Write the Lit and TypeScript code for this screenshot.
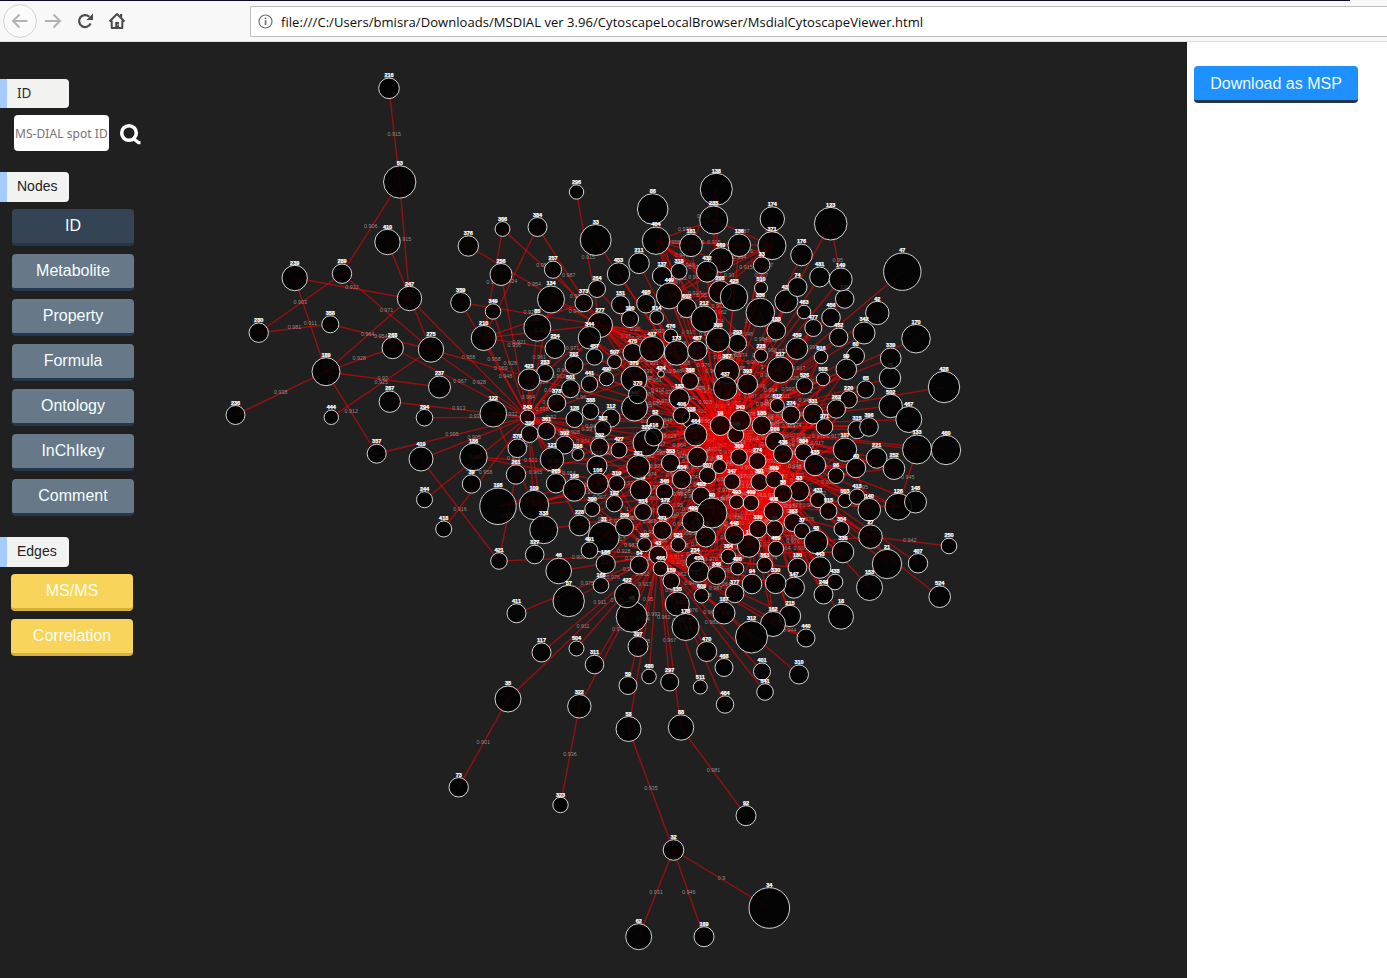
import { LitElement, html, svg, css } from "lit";
import { customElement } from "lit/decorators.js";

interface GraphNode { id: string; label: string; x: number; y: number; r: number; }
interface GraphEdge { a: GraphNode; b: GraphNode; value: string; }

// Each entry: id x y radius. A trailing letter keeps repeated spot IDs apart.
// Order is paint order, so covered nodes come first.
const NODE_DATA = `
120 844.7 299 9.3;75 890 378 10.7;346 735.7 435 8;414 597 466 10;106 597.7 483.5 10.5;45 631.7 616.7 15.5;
382x 634.5 408 13;349x 640.7 490 10.5;28 697.5 457 9.8;13x 705.7 537 10;58x 774.7 529 8.5;
216 389 88.3 10.3;53 399.7 182 16.2;410 387.5 242 12.7;239 294.7 278 12.7;289 342 273.7 9.7;247 409.5 298.5 12.2;
376 468.3 246 10.2;280 258.7 332.7 9.7;358 330.3 324.3 8.5;268 392.7 348 10.7;275 431 349.5 12.7;189 326 371.7 14;
237 439.5 387 11;267 389.8 401.7 10.7;294 424.5 417.7 8.3;236 235.5 415 9.5;444 331.3 417.3 7.2;357 376.7 453.7 9.5;
419 421 459 12;244 424.5 499.7 8;418 443.7 529 8;
296 576.5 192 7.2;384 537.5 227 9.5;366 502.5 229 7.4;33 595.7 240 15.5;256 501 274.5 11;257 553 269.7 8.6;
453 618.5 274 11.2;264 597 289 8.5;134 551 299.5 13.5;373 583.7 303 8.8;151 620.5 304.7 9;359 460.7 302.5 10;
349 493 311.5 7.7;277 600 325 12.5;85 537.3 327.7 13.5;190 630 319 8.6;210 483.7 338 12.5;344 589.5 337.7 11.2;
254 555 348.5 10;457 594.5 357 8.2;291 574 365.3 9;475 632.5 353 9.5;507 614.5 361.7 7;283 545 373 8.5;
423 529 379.7 10.8;490 606.5 378.7 7.2;441 589.5 384 8.2;501 570.5 388.7 9;379 634 379 13;
138 716.3 189.3 16;86 652.7 209 15.3;285 713.7 220 14;174 772.3 219 12.2;371 772 245.7 14;404 656 240.7 13.7;
181 691 245.3 11.3;136 739.3 245.3 11.3;211 639 263.3 10.3;469 720.7 260 12.3;432 707 271.7 10.5;137 662 276 9.6;
318 679 271.3 8;23 761.7 265.3 8.3;510 761 288 6.5;449 669.3 296 12.9;208 720 292 11.3;425 734 297 13.7;
432b 786.3 301.3 11.5;336 760.3 312.5 14.3;495 646 303.7 9.3;602 686.7 308 9.6;514 656.7 317.5 6.8;212 704 319 13;
188 776.3 330.7 9.3;476 670.7 336 7;293 737.5 343.3 9;395 718 340 12;417 652 349 12.5;173 676.5 353 12.2;
487 697.3 350.7 9.7;459 797 348.7 10.8;225 761 355.7 6.6;217 780.3 370 13;387 727 371 12.5;386 690 381 8.5;
424 661 374 3.3;437 725.3 388.5 11.8;393 747.5 384 10;
123 830.7 223.7 16.3;47 902.3 271.7 18.7;176 801.5 255 10.8;481 819.7 277 10;149 840.7 279.5 11.5;74 797.5 287 9.5;
463 804 312 6.8;456 831 317.5 9.3;42 877.3 313 11.7;477 813.3 328 8.5;452 838.7 337.3 9.2;342 864 333 11;
170 916 338.7 14.3;60 855.5 356 9;516 821 357 6.7;339 890.7 358.3 10.3;99 846.3 369.3 10.3;505 823 379 6.8;
428 944 387 15.7;526 804.5 385.7 8.2;65 865.7 389.5 8.7;220 848.7 399.5 8.6;502 890.7 406 11.7;262 836.3 409 9.2;
467 908.8 419.5 13;374 791 415 9;331 813 414 10;271 824.5 427 8.3;315 857 429.7 9;396 869 427 9.3;107 845 449.7 11.7;
133 917 449.5 14.5;460 946 450 14.7;221 876.7 458 10.3;394 803.5 452.3 8.6;435 815 465 10.7;40b 856 468 9.7;
252 894 468.7 10.8;96 836 475.7 7.9;83 799.3 491 10;431 818 500 7.7;503 845 500.5 7;413 857 496.7 7.7;
140 869.3 509.7 11.3;126 898.3 506.7 13.3;148 915.5 502 11;515 828.5 511 8.5;354 841.5 529 7.5;27 870.5 536.7 11.8;
383 793 522.5 9;37 802 531 7.8;48 816 542 11.7;336b 843 552 10.8;250 949 546 7.8;21 887 564 14.7;407 918 563.3 9.7;
180 797.5 567.5 9.3;443 820 567.5 10.8;438 835 582 7.8;147 794 587.7 10.5;153 869.5 587.5 13;249 823.5 594.5 9.5;
524 939.7 596.7 10.8;18 841 616.7 12.5;215 790 616 10.7;440 806 638 9;
122 493.3 413.7 13.3;243 527.5 417.3 7.3;378 556.7 403 9;128 574.5 419 8.5;388 590.5 411.3 8.2;112 611 418 9;
382 603 428.5 8;306 529.7 434 8.5;361 546.5 431 8.8;378b 517.3 448.3 9.3;392 564.7 445 9;398 578 454.5 6;
427 619 450 8;292 599.5 447 9;121 552 459.3 11.7;186 473.5 457 13.7;39 471.5 484 9.2;261 516 474.5 9.7;
265 556 483.3 9.7;195 574.3 490 11.2;319 616.7 483.5 8;192 614.3 503.7 8.2;390 592.3 509 7.5;198 498 506.3 18.2;
109 534 505 14.7;333 543.7 529.7 14;228 579.5 525.5 10.3;31 603.7 537 15.5;259 624.5 527 9;491 589.5 550.3 8.3;
421 499 561 8.3;327 534.7 554.5 9.3;46 558.7 571 12.8;156 605.7 564 9.6;168 601 585.3 7.8;57 568.7 601 15.7;
411 516.5 613.3 9.5;422 627 595.3 12.5;
370 637.7 394.5 9.2;52 655.3 423 8.3;183 679.3 398.5 10;338 691 420 8.7;406 681.5 415.5 8.3;464 695.7 434.7 11.3;
323b 646 443 13;416 653.7 437 9;16 720.3 425.5 10;343 740.3 420.5 10.3;185 761.7 425.5 9.5;512 777.3 405.5 7;
266 775 441.5 9.5;436 783 454 9.5;300 739 457 8.2;274 757.5 461 8.5;321 638.3 467 11.5;353 670.5 463 9;
63 719.5 466.5 7;207 707.5 475.5 8.2;347 732 481.7 8;391 759.5 482 8.5;509 774.3 479.5 8.5;454 681.7 479.5 9.3;
345 664.5 492 8.3;56 783 493.5 9;403 701 496 9;493 736.5 502 7;409 751 503 7.8;408 773.5 511.5 9.5;40 712 513 15;
514b 643 512 8.5;172 665.3 511 7.8;499 693 521.5 10.8;471 662.3 530.3 9.2;11 748.7 546 11.3;448 734.3 535 9.5;
330 758 529 8.8;365 644.5 544.7 7;521 678.3 544.7 7.3;489 776 548.7 7.6;384b 728.3 556.5 7.3;43 658 555 9;
466 660.5 568.5 7.3;54 639.3 565 9;234 695 562 9;450 698.7 571.7 10.5;246 716.5 575.5 9;496 737.3 568.5 6.5;
363 764.7 565 7.7;159 671.3 581 8.3;135 677.3 604 12;609 701.5 595.7 7.3;94 752 584 9.8;330b 775.7 583.3 10.3;
377 734.7 593.5 9.2;187 724 613 11;178 685.5 627 13.5;162 773 624 12.5;312 751.5 637 16;397 638 646.5 10;
470 706.7 651.5 10;468 724 667.5 9;401 762 671.5 8.5;310 799 674.5 9.5;541 765 692 8.3;480 649 676.5 7.3;
59 628 685.5 9;297 669.7 682 9;511 700.3 687 7;484 725 704.5 8.7;88 681 727.5 12.7;58 628.5 729 12.5;
311 594.5 664.5 9.3;504 576.5 648.5 7.5;117 541.5 652.5 9.5;35 508 699 13;322 579.3 706.3 11.7;73 458.7 787.3 9.7;
323 560.5 805 7.7;92 746 815.7 10;32 673.5 850 10.3;34 769.3 908 20.3;62 638.7 936.7 13;169 704 936.7 10`;

const NODES: GraphNode[] = NODE_DATA.split(";").map((row) => {
  const [id, x, y, r] = row.trim().split(/\s+/);
  return { id, label: id.replace(/[a-z]/g, ""), x: +x, y: +y, r: +r };
});
const BY_ID = new Map(NODES.map((n) => [n.id, n] as const));

const EDGE_DATA = `
216-53:0.915 53-289:0.906 53-247:0.915 410-275:0.931 239-247:0.932 239-189:0.911 289-280:0.903 289-275:0.971
280-358:0.981 358-275:0.954 247-189:0.964 268-189:0.928 237-189:0.93 236-189:0.938 275-444:0.925 189-357:0.912
247-243:0.958 275-243:0.928 275-501:0.969 268-243:0.967 267-243:0.913 294-243:0.932 357-243:0.995 419-243:0.905
419-421:0.916 244-243:0.956 418-243:0.958 421-261:0.918 421-43:0.906 411-43:0.975 57-43:0.976 117-43:0.911
35-43:0.911 35-73:0.901 322-323:0.936 322-43:0.978 311-43:0.971 504-43:0.975 58-43:0.978 58-32:0.935 88-92:0.981
88-43:0.967 32-62:0.931 32-169:0.946 32-34:0.9 376-277:0.954 366-210:0.931 366-373:0.957 384-210:0.924
384-277:0.987 256-243:0.956 257-277:0.932 359-277:0.922 359-243:0.958 349-243:0.928 210-277:0.931 210-243:0.948
210-373:0.935 210-254:0.921 134-277:0.949 134-243:0.961 85-243:0.953 296-277:0.915 33-16:0.932 123-120:0.95
133-126:0.945 27-250:0.942 404-285:0.976 404-371:0.995 285-371:0.987 138-181:0.964 174-371:0.981 404-181:0.958
404-136:0.956 404-469:0.93 404-432:0.947 404-425:0.971 371-432:0.964 371-469:0.975 371-449:0.974 371-602:0.93
404-208:0.948 449-208:0.917 449-469:0.909 449-425:0.95 449-318:0.947 432-136:0.96 23-510:0.957 510-371:0.967
371-208:0.915 404-602:0.97 404-336:0.955 404-212:0.962 423-243:0.964 344-243:0.963 501-243:0.934 128-243:0.92
283-277:0.971 121-243:0.938 195-243:0.954 109-243:0.921 333-243:0.965 228-243:0.975 261-243:0.901 186-321:0.968
39-186:0.958 186-345:0.954 122-243:0.932 321-243:0.974 353-243:0.928 427-243:0.928 292-243:0.95 319-243:0.936
345-243:0.97 454-243:0.96 416-243:0.94 323b-243:0.99 122-109:0.971 378b-306:0.95 378-243:0.938 254-243:0.934
291-243:0.956 277-243:0.963 277-395:0.97 277-173:0.951 277-417:0.95 277-487:0.97 277-393:0.94 277-217:0.953
277-437:0.961 277-183:0.954 277-379:0.967 277-476:0.95 277-386:0.949 277-343:0.93 277-338:0.939 277-464:0.95
344-464:0.95 344-16:0.951 344-406:0.948 198-321:0.939 109-321:0.905 109-353:0.98 109-345:0.967 333-172:0.962
379-243:0.96 441-243:0.932 417-243:0.941 198-454:0.978 195-454:0.97 261-464:0.96 271-436:0.97 40b-140:0.95 413-21:0.926
126-16:0.974 148-16:0.961 21-16:0.947 153-16:0.978 524-16:0.947 407-16:0.962 18-391:0.935 443-391:0.96 249-391:0.95
440-162:0.944 310-43:0.971 541-43:0.981 401-43:0.966 312-43:0.958 43-16:1 43-40:0.956 43-464:0.98 43-353:0.968
43-321:0.978 43-323b:0.962 43-417:0.976 43-386:0.981 43-27:0.97 43-448:0.95 43-48:0.962 43-383:0.93 43-336b:0.97`;

const VALUES = ["0.962", "0.931", "0.974", "1", "0.948", "0.917", "0.987", "0.95", "0.928", "0.976", "0.993", "0.964"];

function buildEdges(): GraphEdge[] {
  const edges: GraphEdge[] = [];
  const seen = new Set<string>();
  const link = (a?: GraphNode, b?: GraphNode, value?: string) => {
    if (!a || !b || a === b) return;
    const key = [a.id, b.id].sort().join("|");
    if (seen.has(key)) return;
    seen.add(key);
    edges.push({ a, b, value: value ?? VALUES[edges.length % VALUES.length] });
  };
  const dist = (n: GraphNode, x: number, y: number) => Math.hypot(n.x - x, n.y - y);
  // The tightly correlated cluster below and to the right of the main hub.
  const core = NODES.filter((n) => dist(n, 762, 492) < 56);
  core.forEach((a, i) => core.slice(i + 1).forEach((b, j) => {
    if ((i + j) % 5 !== 0) link(a, b, (i + j) % 4 === 1 ? undefined : "");
  }));
  for (const item of EDGE_DATA.trim().split(/\s+/)) {
    const [pair, value] = item.split(":");
    const [a, b] = pair.split("-");
    link(BY_ID.get(a), BY_ID.get(b), value);
  }
  const hub = BY_ID.get("16")!;
  const low = BY_ID.get("43")!;
  // Neighbours that attach to a few members of the cluster.
  const anchors = ["274", "391", "409", "408", "300", "343"].map((id) => BY_ID.get(id)!);
  NODES.forEach((n, i) => {
    const d = dist(n, 752, 480);
    if (d >= 40 && d < 150) {
      link(n, anchors[i % 6]);
      if (n.x > 690) link(n, anchors[(i + 2) % 6], "");
    }
  });
  NODES.forEach((n, i) => {
    if (dist(n, 715, 400) >= 90) return;
    const other = NODES[(i * 7) % NODES.length];
    link(n, dist(other, 715, 420) < 160 ? other : hub);
  });
  // Spokes of the lower hub.
  for (const n of NODES) {
    const below = n.y > 560 && n.y < 710 && n.x > 530 && n.x < 810;
    if (below || (dist(n, low.x, low.y) < 110 && n.x < 740)) link(n, low);
  }
  // Spokes of the main hub.
  for (const n of NODES) {
    if (n.x > 560 && n.y < 580 && n.y > 180 && dist(n, hub.x, hub.y) < 245) link(n, hub);
  }
  return edges;
}
const EDGES = buildEdges();

@customElement("network-graph")
export class NetworkGraph extends LitElement {
  static styles = css`
    :host { display: block; }
    svg { display: block; width: 1187px; height: 936px; font-family: "Liberation Sans", Arial, sans-serif; }
    .edge { stroke: #f00; stroke-opacity: 0.53; stroke-width: 1.4; }
    .value { font-size: 5.4px; fill: #a8a8a8; fill-opacity: 0.8; text-anchor: middle; }
    .node { fill: #000; fill-opacity: 0.86; stroke: #e8e8e8; stroke-width: 0.9; }
    .name { font-size: 5.5px; font-weight: 700; fill: #fff; stroke: #fff; stroke-width: 0.25; text-anchor: middle; }
  `;
  render() {
    return html`<svg viewBox="0 42 1187 936">
      ${EDGES.map((e) => svg`<line class="edge" x1=${e.a.x} y1=${e.a.y} x2=${e.b.x} y2=${e.b.y}></line>
        ${e.value ? svg`<text class="value" x=${(e.a.x + e.b.x) / 2} y=${(e.a.y + e.b.y) / 2 - 1.2 + 1.8}>${e.value}</text>` : ""}`)}
      ${NODES.map((n) => svg`<circle class="node" cx=${n.x} cy=${n.y} r=${n.r}></circle>
        <text class="name" x=${n.x} y=${n.y - n.r - 0.8}>${n.label}</text>`)}
    </svg>`;
  }
}

@customElement("browser-bar")
export class BrowserBar extends LitElement {
  static styles = css`
    :host { display: flex; flex-direction: column; height: 42px; box-sizing: border-box; background: #f8f8f8; border-bottom: 1px solid #dedede; overflow: hidden; }
    .strip { height: 1px; width: 1350px; background: #0c0c26; }
    .row { display: flex; height: 40px; align-items: center; }
    .nav { width: 250px; height: 40px; flex: none; }
    .url { flex: 1; height: 31px; box-sizing: border-box; border: 1px solid #bcbcbc; border-right: 0; border-radius: 2px 0 0 2px; background: #fff; display: flex; align-items: center; padding-left: 7px; gap: 8px; }
    .info { width: 15px; height: 15px; flex: none; }
    .text { font: 13px/28px "Open Sans", "Noto Sans", sans-serif; color: #0c0c0d; white-space: pre; letter-spacing: 0.055px; padding-top: 2px; }
  `;
  render() {
    return html`
      <div class="strip"></div>
      <div class="row">
        <svg class="nav" viewBox="0 1 250 40" fill="none">
          <circle cx="20" cy="21" r="16.4" fill="#fbfbfb" stroke="#d2d2d2"></circle>
          <path d="M27.5 21H13M19.5 14.5L13 21l6.5 6.5" stroke="#b3b3b3" stroke-width="2"></path>
          <path d="M45 21h15M53.5 14.5L60 21l-6.500 6.500" stroke="#b3b3b3" stroke-width="2"></path>
          <path d="M89.300 16.800A6 6 0 1 0 90.600 23.500" stroke="#4c4c4f" stroke-width="2.200"></path>
          <path d="M93 13.500V20h-6.500z" fill="#4c4c4f"></path>
          <path d="M109.500 21.500L117 14l7.500 7.500M111.700 20.500V28h10.600V20.500" stroke="#4c4c4f" stroke-width="2" stroke-linejoin="round"></path>
          <path d="M120 14h2.200v4L120 16z" fill="#4c4c4f"></path>
          <path d="M115.200 28v-6h3.800v6z" fill="#4c4c4f"></path>
          <path d="M117.400 24.300h1v1.200h-1z" fill="#f8f8f8"></path>
        </svg>
        <div class="url">
          <svg class="info" viewBox="0 0 15 15">
            <circle cx="7.500" cy="7.500" r="6.500" fill="none" stroke="#717174" stroke-width="1.200"></circle>
            <path d="M6.700 6.300h1.700V11H6.700zM6.700 3.600h1.700v1.600H6.700z" fill="#717174"></path>
          </svg>
          <div class="text">file:///C:/Users/bmisra/Downloads/MSDIAL ver 3.96/CytoscapeLocalBrowser/MsdialCytoscapeViewer.html</div>
        </div>
      </div>`;
  }
}

@customElement("app-root")
export class AppRoot extends LitElement {
  static styles = css`
    :host { display: flex; flex-direction: column; width: 1387px; height: 978px; overflow: hidden; font-family: "Liberation Sans", Arial, sans-serif; background: #fefefe; }
    .body { display: grid; grid-template-columns: 1187px 1fr; height: 936px; }
    network-graph { grid-area: 1 / 1; background: #202020; }
    .side { grid-area: 1 / 1; z-index: 1; width: 160px; padding-top: 37px; display: flex; flex-direction: column; align-items: flex-start; }
    .tag { width: 69px; height: 30px; box-sizing: border-box; border-left: 7px solid #a6ccfd; border-radius: 0 4px 4px 0; background: #f2f3f1; color: #222; font-size: 14px; line-height: 29px; padding-left: 10px; }
    .tag.first { height: 29px; font-family: "Noto Sans", sans-serif; font-size: 13.5px; line-height: 28px; color: #2b2b36; }
    .search { display: flex; align-items: center; margin: 7px 0 21px 14px; height: 36px; }
    .field { width: 95px; height: 36px; box-sizing: border-box; border: 0; border-radius: 4px; padding: 0 0 0 1px; background: #fff; font: 12px "Noto Sans", sans-serif; letter-spacing: 0.06px; outline: none; }
    .field::placeholder { color: #757575; opacity: 1; }
    .glass { width: 24px; height: 24px; margin-left: 9px; }
    .group { display: flex; flex-direction: column; gap: 8px; margin: 7px 0 21px 12px; }
    .group.edges { margin-left: 11px; }
    .btn { width: 122px; height: 37px; box-sizing: border-box; border: 0; border-bottom: 3px solid #25364e; border-radius: 4px; background: #677888; color: #f4ffff; font: 16px/32px "Liberation Sans", Arial, sans-serif; padding: 0 0 1px; text-align: center; }
    .btn.on { background: #344454; }
    .btn.gold { background: #f8d45a; border-bottom-color: #d5b03a; color: #fafff0; }
    .panel { grid-area: 1 / 2; padding: 24px 0 0 7px; }
    .btn.save { width: 164px; background: #1e90ff; border-bottom-color: #24344e; color: #f0faff; padding: 1px 0 0; }
  `;
  render() {
    return html`
      <browser-bar></browser-bar>
      <div class="body">
        <network-graph></network-graph>
        <div class="side">
          <div class="tag first">ID</div>
          <div class="search">
            <input class="field" placeholder="MS-DIAL spot ID" />
            <svg class="glass" viewBox="118 121 24 24" fill="none" stroke="#fff">
              <circle cx="129" cy="133" r="7.300" stroke-width="3.600"></circle>
              <path d="M132.500 138l6 4.600h2" stroke-width="3.200"></path>
            </svg>
          </div>
          <div class="tag">Nodes</div>
          <div class="group">
            ${["ID", "Metabolite", "Property", "Formula", "Ontology", "InChIkey", "Comment"].map(
              (name, i) => html`<button class="btn ${i === 0 ? "on" : ""}">${name}</button>`)}
          </div>
          <div class="tag">Edges</div>
          <div class="group edges">
            <button class="btn gold">MS/MS</button>
            <button class="btn gold">Correlation</button>
          </div>
        </div>
        <div class="panel"><button class="btn save">Download as MSP</button></div>
      </div>`;
  }
}
